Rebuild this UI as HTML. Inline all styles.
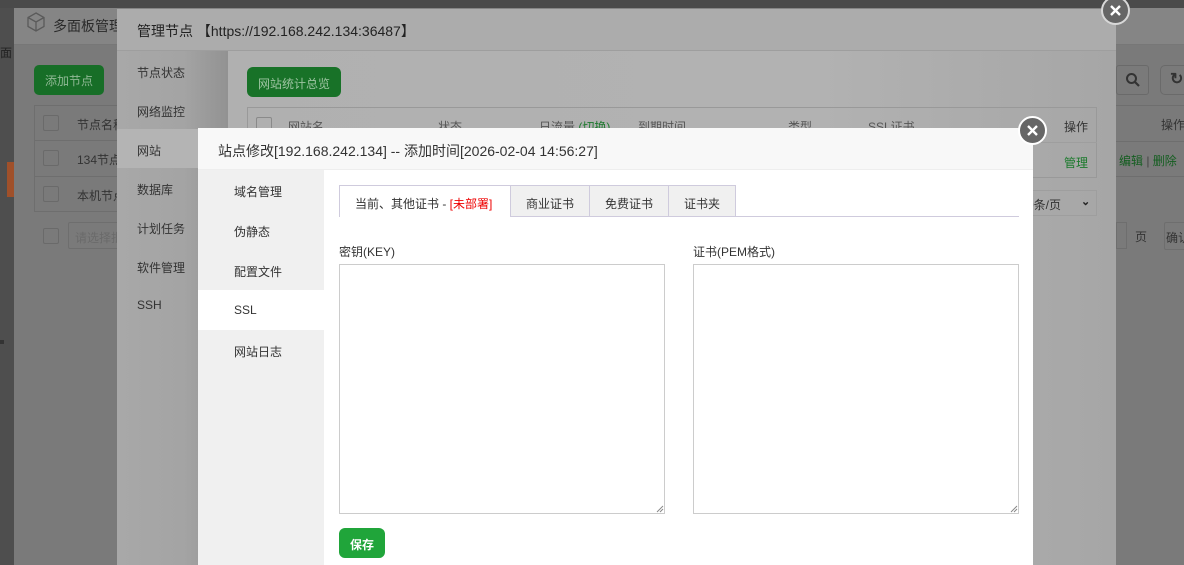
<!DOCTYPE html>
<html><head><meta charset="utf-8"><style>
*{margin:0;padding:0;box-sizing:border-box}
body{width:1184px;height:565px;overflow:hidden;position:relative;background:#4f4f4f;font-family:"Liberation Sans","Noto Sans CJK SC",sans-serif;font-size:12px;color:#333}
.a{position:absolute}
.t{position:absolute;white-space:nowrap}
.cb{position:absolute;width:16px;height:16px;border:1px solid #6a6a6a;border-radius:2px}
</style></head><body>
<!-- base strip -->
<div class="a" style="left:0;top:0;width:1184px;height:8px;background:#4a4a4a"></div>
<div class="a" style="left:0;top:8px;width:14px;height:557px;background:#4e4e4e"></div>
<div class="t" style="left:0;top:44px;color:#222;font-size:12px">面</div>
<div class="a" style="left:0;top:340px;width:4px;height:4px;background:#333"></div>
<!-- panel 1 -->
<div class="a" style="left:14px;top:8px;width:1170px;height:557px;background:#7a7a7a"></div>
<div class="a" style="left:14px;top:8px;width:1170px;height:37px;background:#858585;border-bottom:1px solid #777"></div>
<svg class="a" style="left:25px;top:11px" width="22" height="22" viewBox="0 0 22 22"><path d="M11 2 L19 6.5 V15.5 L11 20 L3 15.5 V6.5 Z M3 6.5 L11 11 L19 6.5 M11 11 V20" fill="none" stroke="#5a5a5a" stroke-width="1.3"/></svg>
<div class="t" style="left:53px;top:16px;font-size:14px;color:#2a2a2a">多面板管理</div>
<div class="a" style="left:34px;top:65px;width:70px;height:30px;background:#176e27;border-radius:5px"></div>
<div class="t" style="left:45px;top:72px;color:#8fb894;font-size:12px">添加节点</div>
<div class="a" style="left:34px;top:105px;width:100px;height:107px;border:1px solid #6e6e6e"></div>
<div class="a" style="left:34px;top:140px;width:100px;height:1px;background:#6e6e6e"></div>
<div class="a" style="left:34px;top:176px;width:100px;height:1px;background:#6e6e6e"></div>
<div class="cb" style="left:43px;top:115px"></div><div class="t" style="left:77px;top:116px;color:#333">节点名称</div>
<div class="cb" style="left:43px;top:150px"></div><div class="t" style="left:77px;top:151px;color:#333">134节点</div>
<div class="cb" style="left:43px;top:186px"></div><div class="t" style="left:77px;top:187px;color:#333">本机节点</div>
<div class="a" style="left:7px;top:162px;width:7px;height:35px;background:#a0502a"></div>
<div class="cb" style="left:43px;top:228px"></div>
<div class="a" style="left:68px;top:222px;width:60px;height:27px;border:1px solid #6e6e6e;border-radius:2px"></div>
<div class="t" style="left:75px;top:229px;color:#6a6a6a">请选择批</div>
<!-- right side of panel1 -->
<div class="a" style="left:1116px;top:65px;width:33px;height:30px;border:1px solid #6a6a6a;border-radius:3px"></div>
<svg class="a" style="left:1125px;top:72px" width="16" height="16" viewBox="0 0 16 16"><circle cx="6.5" cy="6.5" r="4.5" fill="none" stroke="#333" stroke-width="2"/><path d="M10 10 L14 14" stroke="#333" stroke-width="2.2"/></svg>
<div class="a" style="left:1160px;top:65px;width:30px;height:30px;border:1px solid #6a6a6a;border-radius:5px"></div>
<div class="t" style="left:1170px;top:69px;font-size:16px;color:#333;font-weight:bold">&#8635;</div>
<div class="a" style="left:1116px;top:105px;width:68px;height:72px;border-top:1px solid #6e6e6e;border-bottom:1px solid #6e6e6e"></div>
<div class="a" style="left:1116px;top:141px;width:68px;height:1px;background:#6e6e6e"></div>
<div class="t" style="left:1161px;top:116px;color:#333">操作</div>
<div class="t" style="left:1119px;top:152px;color:#145e20">编辑 <span style="color:#444">|</span> 删除</div>
<div class="a" style="left:1116px;top:222px;width:11px;height:27px;border:1px solid #6e6e6e"></div>
<div class="t" style="left:1135px;top:228px;color:#333">页</div>
<div class="a" style="left:1164px;top:222px;width:30px;height:28px;border:1px solid #6e6e6e;border-radius:2px"></div>
<div class="t" style="left:1166px;top:229px;color:#333">确认</div>
<!-- panel 2 -->
<div class="a" style="left:117px;top:9px;width:999px;height:556px;background:linear-gradient(90deg,#b0b0b0,#b2b2b2 70%,#a6a6a6)"></div>
<div class="a" style="left:117px;top:9px;width:999px;height:42px;background:#acacac;border-bottom:1px solid #9e9e9e"></div>
<div class="t" style="left:137px;top:21px;font-size:14px;color:#222">管理节点 【https://192.168.242.134:36487】</div>
<div class="a" style="left:117px;top:51px;width:111px;height:514px;background:linear-gradient(90deg,#a8a8a8,#a4a4a4 60%,#929292)"></div>
<div class="a" style="left:117px;top:129px;width:111px;height:39px;background:#b4b4b4"></div>
<div class="t" style="left:137px;top:64px;color:#333">节点状态</div>
<div class="t" style="left:137px;top:103px;color:#333">网络监控</div>
<div class="t" style="left:137px;top:142px;color:#333">网站</div>
<div class="t" style="left:137px;top:181px;color:#333">数据库</div>
<div class="t" style="left:137px;top:220px;color:#333">计划任务</div>
<div class="t" style="left:137px;top:259px;color:#333">软件管理</div>
<div class="t" style="left:137px;top:298px;color:#333">SSH</div>
<div class="a" style="left:247px;top:67px;width:94px;height:30px;background:#187228;border-radius:6px"></div>
<div class="t" style="left:258px;top:75px;color:#9ec4a2">网站统计总览</div>
<div class="a" style="left:247px;top:107px;width:850px;height:71px;border:1px solid #999"></div>
<div class="a" style="left:247px;top:142px;width:850px;height:1px;background:#9e9e9e"></div>
<div class="cb" style="left:256px;top:117px;border-color:#8a8a8a"></div>
<div class="t" style="left:288px;top:118px;color:#555">网站名</div>
<div class="t" style="left:438px;top:118px;color:#555">状态</div>
<div class="t" style="left:539px;top:118px;color:#555">日流量 <span style="color:#1d7a2e">(切换)</span></div>
<div class="t" style="left:638px;top:118px;color:#555">到期时间</div>
<div class="t" style="left:788px;top:118px;color:#555">类型</div>
<div class="t" style="left:868px;top:118px;color:#555">SSL证书</div>
<div class="t" style="left:1064px;top:118px;color:#333">操作</div>
<div class="t" style="left:1064px;top:154px;color:#1a7a2b">管理</div>
<div class="a" style="left:1020px;top:190px;width:77px;height:26px;border:1px solid #9e9e9e"></div>
<div class="t" style="left:1027px;top:196px;color:#333">0条/页</div>
<div class="t" style="left:1081px;top:195px;color:#222;font-size:11px;font-weight:bold">&#8964;</div>
<!-- close 2 -->
<div class="a" style="left:1101px;top:-4px;width:29px;height:29px;border-radius:50%;background:#666;border:2px solid #d8d8d8"></div>
<svg class="a" style="left:1108px;top:3px" width="15" height="15"><path d="M3 3 L12 12 M12 3 L3 12" stroke="#fff" stroke-width="2.4"/></svg>
<!-- panel 3 -->
<div class="a" style="left:198px;top:128px;width:835px;height:437px;background:#fff"></div>
<div class="a" style="left:198px;top:128px;width:835px;height:42px;background:#f8f8f8;border-bottom:1px solid #eee"></div>
<div class="t" style="left:218px;top:141px;font-size:14px;color:#333">站点修改[192.168.242.134] -- 添加时间[2026-02-04 14:56:27]</div>
<div class="a" style="left:198px;top:170px;width:126px;height:395px;background:#f0f0f0"></div>
<div class="a" style="left:198px;top:290px;width:126px;height:40px;background:#fff"></div>
<div class="t" style="left:234px;top:183px;color:#333">域名管理</div>
<div class="t" style="left:234px;top:223px;color:#333">伪静态</div>
<div class="t" style="left:234px;top:263px;color:#333">配置文件</div>
<div class="t" style="left:234px;top:303px;color:#333">SSL</div>
<div class="t" style="left:234px;top:343px;color:#333">网站日志</div>
<!-- tabs -->
<div class="a" style="left:339px;top:216px;width:680px;height:1px;background:#cfcbdd"></div>
<div class="a" style="left:339px;top:185px;width:172px;height:32px;background:#fff;border:1px solid #cfcbdd;border-bottom:none"></div>
<div class="t" style="left:355px;top:195px;color:#333">当前、其他证书 - <span style="color:#e00">[未部署]</span></div>
<div class="a" style="left:510px;top:185px;width:80px;height:31px;background:#f0f0f0;border:1px solid #cfcbdd;border-bottom:none"></div>
<div class="t" style="left:526px;top:195px;color:#333">商业证书</div>
<div class="a" style="left:589px;top:185px;width:80px;height:31px;background:#f0f0f0;border:1px solid #cfcbdd;border-bottom:none"></div>
<div class="t" style="left:605px;top:195px;color:#333">免费证书</div>
<div class="a" style="left:668px;top:185px;width:68px;height:31px;background:#f0f0f0;border:1px solid #cfcbdd;border-bottom:none"></div>
<div class="t" style="left:684px;top:195px;color:#333">证书夹</div>
<div class="t" style="left:339px;top:243px;color:#333">密钥(KEY)</div>
<div class="t" style="left:693px;top:243px;color:#333">证书(PEM格式)</div>
<div class="a" style="left:339px;top:264px;width:326px;height:250px;border:1px solid #ccc"></div>
<div class="a" style="left:693px;top:264px;width:326px;height:250px;border:1px solid #ccc"></div>
<svg class="a" style="left:656px;top:505px" width="8" height="8"><path d="M7 1 L1 7 M7 4 L4 7" stroke="#888"/></svg>
<svg class="a" style="left:1010px;top:505px" width="8" height="8"><path d="M7 1 L1 7 M7 4 L4 7" stroke="#888"/></svg>
<div class="a" style="left:339px;top:528px;width:46px;height:30px;background:#20a53a;border-radius:6px"></div>
<div class="t" style="left:350px;top:536px;color:#fff;font-weight:bold">保存</div>
<!-- close 3 -->
<div class="a" style="left:1018px;top:116px;width:29px;height:29px;border-radius:50%;background:#666;border:2px solid #fff"></div>
<svg class="a" style="left:1025px;top:123px" width="15" height="15"><path d="M3 3 L12 12 M12 3 L3 12" stroke="#fff" stroke-width="2.4"/></svg>
</body></html>
